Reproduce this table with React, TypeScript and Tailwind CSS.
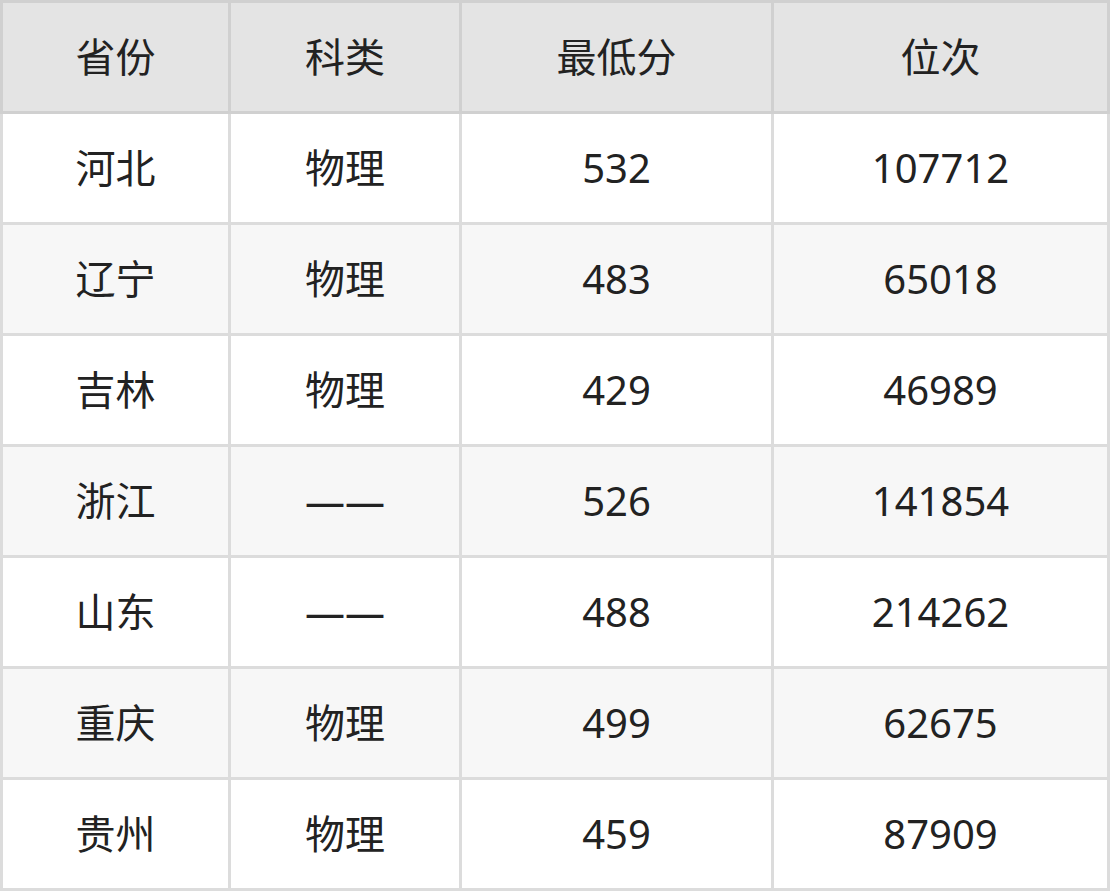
const header = ['省份', '科类', '最低分', '位次'];

const rows = [
  ['河北', '物理', '532', '107712'],
  ['辽宁', '物理', '483', '65018'],
  ['吉林', '物理', '429', '46989'],
  ['浙江', '——', '526', '141854'],
  ['山东', '——', '488', '214262'],
  ['重庆', '物理', '499', '62675'],
  ['贵州', '物理', '459', '87909'],
];

const cols = 'grid grid-cols-[225px_228px_309px_333px] gap-[3px]';

export default function App() {
  return (
    <div
      className="w-[1110px] h-[891px] bg-[#dcdcdc] flex flex-col text-[40px] text-[#222]"
      style={{ fontFamily: '"Noto Sans", "Noto Sans CJK SC", sans-serif' }}
    >
      {/* header */}
      <div className={`${cols} bg-[#d0d0d0] p-[3px]`}>
        {header.map((h) => (
          <div key={h} className="h-[108px] bg-[#e4e4e4] flex items-center justify-center">
            {h}
          </div>
        ))}
      </div>
      {/* body */}
      <div className="flex flex-col gap-[3px] px-[3px] pb-[3px]">
        {rows.map((r, i) => (
          <div key={r[0]} className={`${cols} h-[108px]`}>
            {r.map((c, j) => (
              <div
                key={j}
                className={`${i % 2 === 1 ? 'bg-[#f7f7f7]' : 'bg-white'} flex items-center justify-center`}
              >
                {c}
              </div>
            ))}
          </div>
        ))}
      </div>
    </div>
  );
}
